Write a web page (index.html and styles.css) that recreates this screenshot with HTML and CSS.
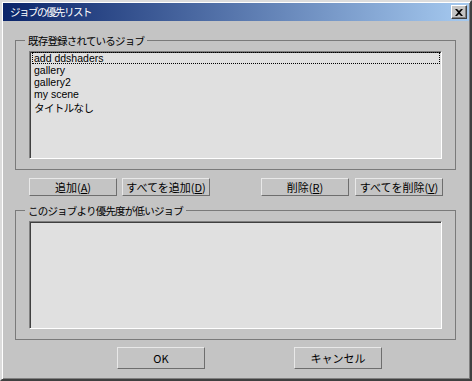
FILE: index.html
```html
<!DOCTYPE html>
<html lang="ja">
<head>
<meta charset="UTF-8">
<title>ジョブの優先リスト</title>
<link rel="stylesheet" href="styles.css">
</head>
<body>
<div class="window">
  <div class="titlebar">
    <span class="title">ジョブの優先リスト</span>
    <button class="close-btn" aria-label="閉じる">
      <svg width="8" height="7" viewBox="0 0 8 7"><path d="M0 0h2l2 2 2-2h2L5 3.5 8 7H6L4 5 2 7H0l3-3.5z" fill="#000"/></svg>
    </button>
  </div>

  <div class="client">
    <fieldset class="group">
      <legend>既存登録されているジョブ</legend>
      <ul class="listbox">
        <li class="focus">add ddshaders</li>
        <li>gallery</li>
        <li>gallery2</li>
        <li>my scene</li>
        <li class="jp">タイトルなし</li>
      </ul>
    </fieldset>

    <div class="btn-row">
      <div class="btn-pair">
        <button class="btn">追加(<u>A</u>)</button>
        <button class="btn">すべてを追加(<u>D</u>)</button>
      </div>
      <div class="btn-pair">
        <button class="btn">削除(<u>R</u>)</button>
        <button class="btn">すべてを削除(<u>V</u>)</button>
      </div>
    </div>

    <fieldset class="group group-low">
      <legend>このジョブより優先度が低いジョブ</legend>
      <ul class="listbox"></ul>
    </fieldset>

    <div class="footer-row">
      <button class="btn btn-dlg">OK</button>
      <button class="btn btn-dlg">キャンセル</button>
    </div>
  </div>
</div>
</body>
</html>
```

FILE: styles.css
```css
/* ---------- GLOBAL ---------- */
html,body{margin:0;padding:0;background:#c4c4c4;}
body{font-family:"Noto Sans CJK JP","DejaVu Sans",sans-serif;font-size:11px;color:#000;}

/* ---------- WINDOW FRAME ---------- */
.window{width:472px;height:381px;box-sizing:border-box;background:#c4c4c4;
  border:2px solid;border-color:#dcdcdc #404040 #404040 #dcdcdc;
  box-shadow:inset 1px 1px 0 #fff,inset -1px -1px 0 #808080;padding:1px;}

.titlebar{height:18px;display:flex;align-items:center;justify-content:space-between;
  background:linear-gradient(to right,#0a246a,#a6caf0);padding:0 2px 0 7px;}
.title{color:#fff;font-size:10.5px;line-height:18px;letter-spacing:-1.5px;}
.close-btn{width:16px;height:14px;padding:0;margin:0;display:flex;align-items:center;justify-content:center;
  background:#c4c4c4;border:1px solid;border-color:#fff #404040 #404040 #fff;box-shadow:inset -1px -1px 0 #808080;}

/* ---------- CLIENT ---------- */
.client{padding:13px 13px 0 12px;}

.group{margin:0;padding:4px 13px 10px;border:1px solid #7a7a7a;min-width:0;}
.group legend{padding:0 3px;margin-left:-4px;font-size:10.5px;line-height:13px;letter-spacing:-.8px;}
.group-low{margin-top:8px;}

.listbox{list-style:none;margin:0;padding:0 1px 0 2px;height:108px;box-sizing:border-box;background:#e0e0e0;
  border:1px solid;border-color:#808080 #fff #fff #808080;box-shadow:inset 1px 1px 0 #404040;}
.listbox li{font-family:"Liberation Sans",Arial,sans-serif;font-size:10.5px;line-height:12px;height:12px;padding-left:2px;white-space:nowrap;}
.listbox li.jp{font-family:"Noto Sans CJK JP",sans-serif;letter-spacing:-.6px;line-height:15px;height:15px;}
.listbox li.focus{outline:1px dotted #000;outline-offset:-1px;}

/* ---------- BUTTONS ---------- */
.btn{font:inherit;color:#000;background:#c4c4c4;width:88px;height:18px;padding:0;margin:0;
  border:1px solid;border-color:#e8e8e8 #6e6e6e #6e6e6e #e8e8e8;line-height:14px;}
.btn u{text-underline-offset:1px;}

.btn-row{display:flex;justify-content:space-between;margin:8px 13px 0 14px;}
.btn-pair{display:flex;gap:5px;}
.btn-row .btn-pair:last-child{gap:6px;}

.footer-row{display:flex;justify-content:space-between;padding:7px 74px 0 102px;}
.btn-dlg{height:22px;}
```
